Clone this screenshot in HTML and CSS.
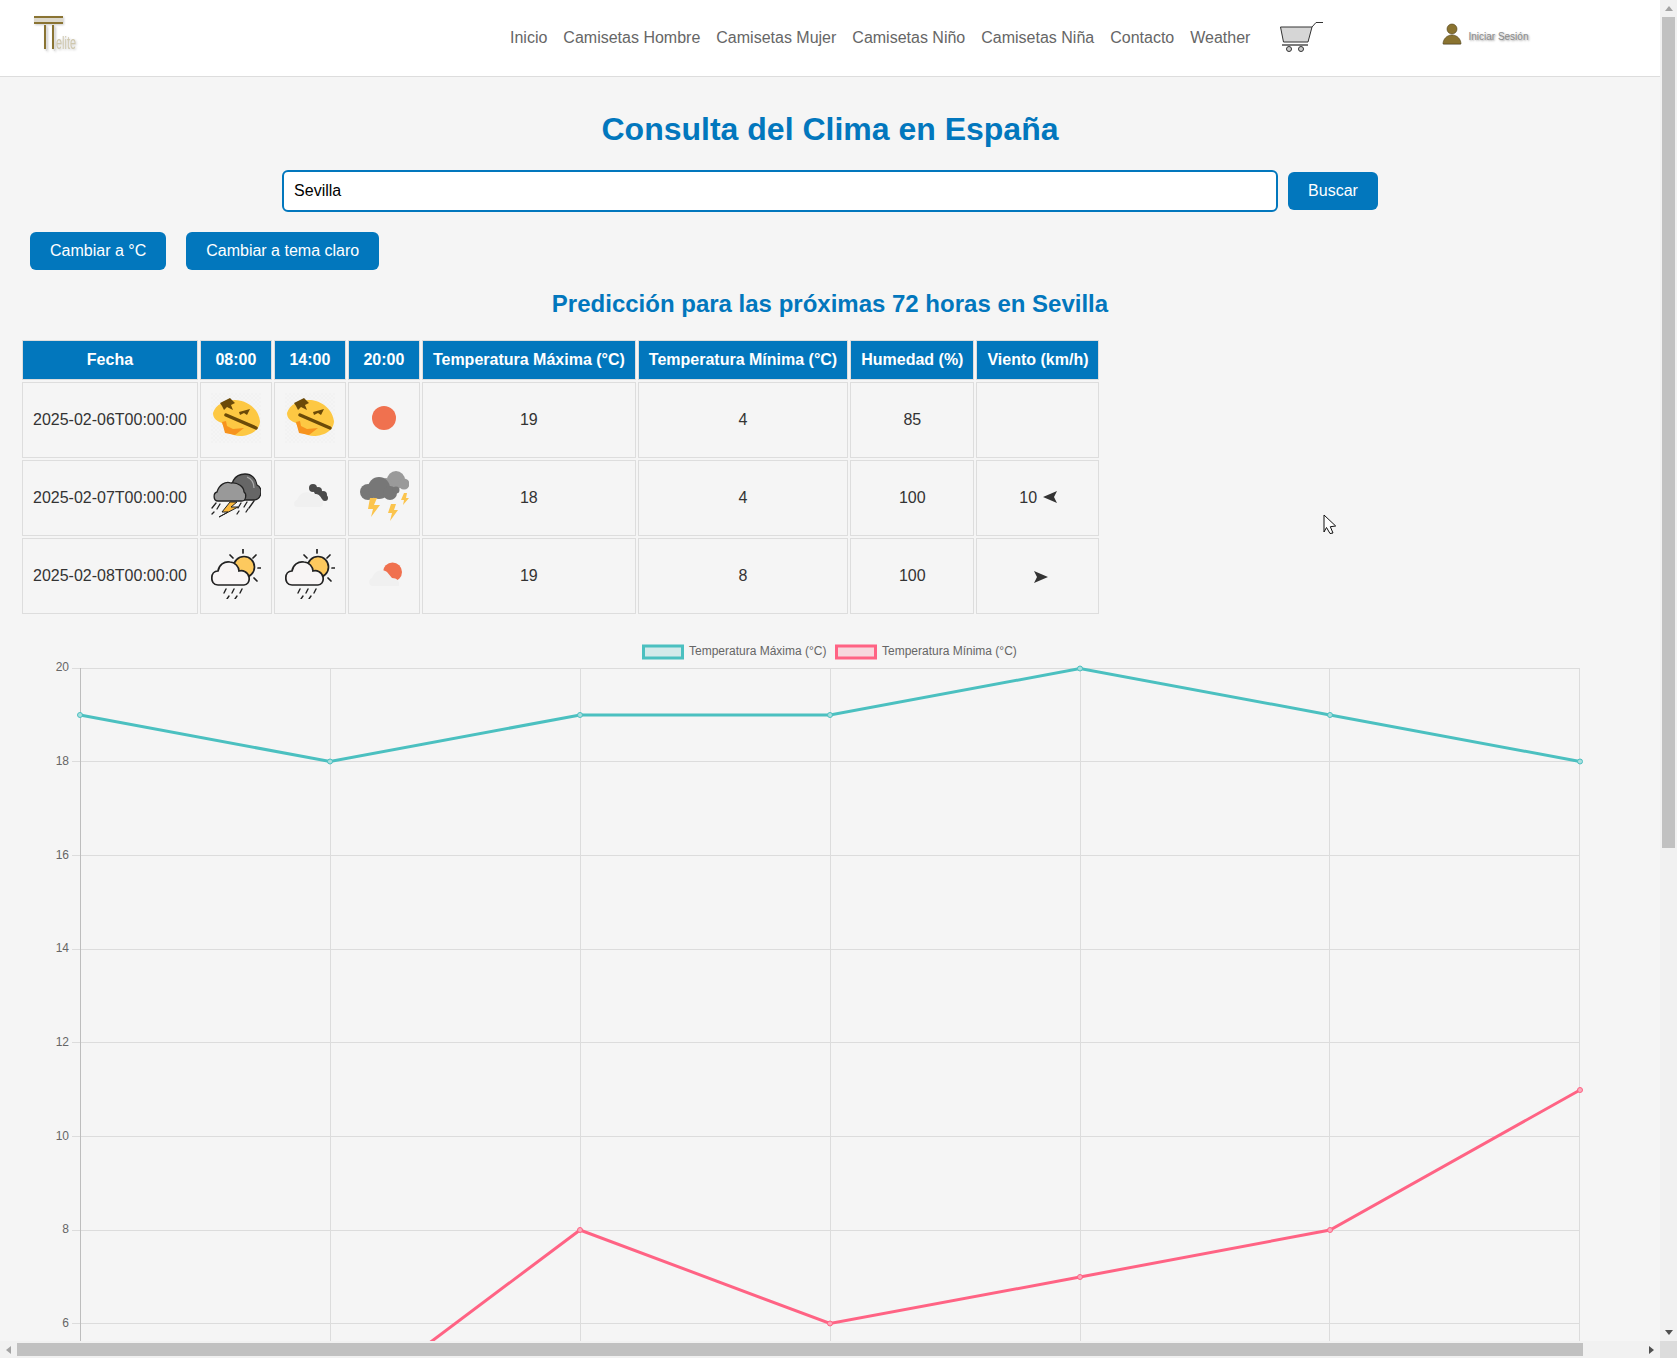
FILE: index.html
```html
<!DOCTYPE html>
<html lang="es">
<head>
<meta charset="utf-8">
<title>Consulta del Clima en España</title>
<link rel="stylesheet" href="styles.css">
</head>
<body>
<svg class="defs" width="0" height="0" aria-hidden="true">
  <defs>
    <pattern id="checker" width="4" height="4" patternUnits="userSpaceOnUse">
      <rect width="2" height="2" fill="#ededed"/><rect x="2" y="2" width="2" height="2" fill="#ededed"/>
    </pattern>
    <symbol id="i-broken" viewBox="0 0 50 50">
      <rect width="50" height="50" fill="url(#checker)" opacity=".35"/>
      <path d="M2 20C4 12 14 7 24 7C34 7 47 14 49 28C49 38 38 43 29 43C20 43 14 38 11 30C6 28 2 26 2 20Z" fill="#fdc843"/>
      <path d="M11 29L14 40L24 42L33 35L22 36L16 33L15 28Z" fill="#f7931e"/>
      <path d="M15 22L45 35" stroke="#6b4a08" stroke-width="3.500" stroke-linecap="round"/>
      <path d="M9 10L19 5L24 10L20 12L22 17L16 14L13 17L11 13Z" fill="#6b4a08"/>
      <path d="M28 19L39 16L36 22L33 20L29 22Z" fill="#6b4a08"/>
    </symbol>
    <symbol id="i-sunrain" viewBox="0 0 50 50">
      <g stroke="#222" stroke-width="1.700" stroke-linecap="round" fill="none">
        <path d="M32 0V4M19 6L22 9M45 6L42 9M47 19H50M43 29L46 32"/>
        <circle cx="33" cy="18" r="10.500" fill="#fdc95e"/>
        <path d="M7 36C2 36 .8 32 .8 29C.8 25 3 22 7 22C8 16 13 12 19 13C24 13 28 18 28 22C32 21 37 23 38 28C39 33 36 36 33 36Z" fill="#f8f5f5"/>
        <path d="M15 40L13 44M23 40L21 44M31 40L29 44M18 47L16 50M26 47L24 50" stroke-width="1.400"/>
      </g>
    </symbol>
    <symbol id="i-arrow" viewBox="0 0 14 12">
      <path d="M0 0L14 6L0 12L3 6Z" fill="#333"/>
    </symbol>
  </defs>
</svg>

<div class="window">
  <div class="page">
    <header class="topbar">
      <svg class="logo" width="47" height="40" viewBox="0 0 47 40" aria-label="Logo">
        <rect x="1" y="4" width="29" height="2" fill="#8a7433"/>
        <rect x="1" y="6" width="29" height="4" fill="#dcd8cc"/>
        <rect x="1" y="10" width="29" height="2" fill="#8a7433"/>
        <rect x="11" y="13" width="2" height="24" fill="#8a7433"/>
        <rect x="19" y="13" width="2" height="24" fill="#8a7433"/>
        <rect x="13" y="14" width="1" height="25" fill="#ddd"/>
        <rect x="21" y="14" width="1" height="25" fill="#ddd"/>
        <text class="logo-text" x="23" y="37" textLength="20" lengthAdjust="spacingAndGlyphs">elite</text>
      </svg>
      <nav class="nav">
        <a>Inicio</a>
        <a>Camisetas Hombre</a>
        <a>Camisetas Mujer</a>
        <a>Camisetas Niño</a>
        <a>Camisetas Niña</a>
        <a>Contacto</a>
        <a>Weather</a>
      </nav>
      <svg class="cart" width="44" height="32" viewBox="0 0 44 32" aria-label="Carrito">
        <path d="M1.500 9H33L29 24H4.500Z" fill="#d6d6d6" stroke="#333" stroke-width="1"/>
        <path d="M33 9L37 4.500H44" fill="none" stroke="#333" stroke-width="1"/>
        <path d="M3 27H29" stroke="#333" stroke-width="1.300"/>
        <circle cx="10" cy="31" r="2.500" fill="#ccc" stroke="#333"/>
        <circle cx="22" cy="31" r="2.500" fill="#ccc" stroke="#333"/>
      </svg>
      <div class="login">
        <svg width="20" height="22" viewBox="0 0 20 22" aria-hidden="true">
          <ellipse cx="10" cy="21.500" rx="9" ry="1" fill="#ccc"/>
          <circle cx="10" cy="6" r="5" fill="#8a7330" stroke="#4d3f18" stroke-width=".6"/>
          <path d="M1 21C1 16 5 12 10 12C15 12 19 16 19 21Z" fill="#8a7330" stroke="#4d3f18" stroke-width=".6"/>
        </svg>
        <span class="login-text">Iniciar Sesión</span>
      </div>
    </header>

    <main>
      <h1>Consulta del Clima en España</h1>
      <form class="search">
        <input class="search-input" type="text" value="Sevilla">
        <button class="btn" type="button">Buscar</button>
      </form>
      <div class="toggles">
        <button class="btn" type="button">Cambiar a °C</button>
        <button class="btn" type="button">Cambiar a tema claro</button>
      </div>
      <h2>Predicción para las próximas 72 horas en Sevilla</h2>

      <table class="forecast">
        <thead>
          <tr>
            <th>Fecha</th><th class="col-icon">08:00</th><th class="col-icon">14:00</th><th class="col-icon">20:00</th>
            <th>Temperatura Máxima (°C)</th><th>Temperatura Mínima (°C)</th><th>Humedad (%)</th><th>Viento (km/h)</th>
          </tr>
        </thead>
        <tbody>
          <tr>
            <td>2025-02-06T00:00:00</td>
            <td><svg class="wx"><use href="#i-broken"/></svg></td>
            <td><svg class="wx"><use href="#i-broken"/></svg></td>
            <td><svg class="wx" viewBox="0 0 50 50"><circle cx="25" cy="25" r="12" fill="#f0714f"/></svg></td>
            <td>19</td><td>4</td><td>85</td><td></td>
          </tr>
          <tr>
            <td>2025-02-07T00:00:00</td>
            <td>
              <svg class="wx" viewBox="0 0 50 50">
                <path d="M22 24C18 13 23 3 34 3C41 3 45 8 46 14C50 16 50.500 20 49.500 24C48 28 46 29 43 29H26Z" fill="#666" stroke="#222" stroke-width="1.300"/>
                <path d="M36 6C41 8 43 12 43 17" fill="none" stroke="#aaa" stroke-width="1.200"/>
                <path d="M7 30C2 30 2 22 6 21C8 14 14 10 20 12C27 11 33 16 33 21C36 23 35 30 31 30Z" fill="#999" stroke="#222" stroke-width="1.300"/>
                <path d="M19 31L11 41H17L8 46L27 36H20L26 31Z" fill="#fbb93d" stroke="#222" stroke-width="1"/>
                <path d="M5 32L1 37M9 33L6 38M3 41L1 43M30 32L27 37M36 31L33 36M43 30L38 37M28 40L26 43M37 38L35 41" stroke="#222" stroke-width="1.300" stroke-linecap="round"/>
              </svg>
            </td>
            <td>
              <svg class="wx" viewBox="0 0 50 50">
                <g fill="#4a4a4a"><circle cx="28" cy="17" r="4"/><circle cx="33" cy="20" r="4"/><circle cx="38" cy="24" r="4"/><circle cx="40" cy="27" r="3"/></g>
                <path d="M12 36C8 36 8 30 12 29C14 22 22 19 27 23C33 22 37 26 37 30C39 32 38 36 35 36Z" fill="#f0f0f0"/>
              </svg>
            </td>
            <td>
              <svg class="wx" viewBox="0 0 50 50">
                <g fill="#9a9a9a"><circle cx="37" cy="9" r="9"/><circle cx="45" cy="13" r="5.500"/><circle cx="27" cy="13" r="6"/></g>
                <g fill="#777"><circle cx="9" cy="21" r="8"/><circle cx="20" cy="17" r="11"/><circle cx="31" cy="22" r="7"/><circle cx="37" cy="19" r="3.500"/></g>
                <path d="M11 27L9 38H14L12 46L21 34H15L18 27Z" fill="#fbc44d"/>
                <path d="M32 33L29 42H33L31 50L39 39H35L37 33Z" fill="#fbc44d"/>
                <path d="M45 22L42 29H45L44 34L50 27H47L48 22Z" fill="#fbc44d"/>
              </svg>
            </td>
            <td>18</td><td>4</td><td>100</td>
            <td>10 <svg class="wind wind-left"><use href="#i-arrow"/></svg></td>
          </tr>
          <tr>
            <td>2025-02-08T00:00:00</td>
            <td><svg class="wx"><use href="#i-sunrain"/></svg></td>
            <td><svg class="wx"><use href="#i-sunrain"/></svg></td>
            <td>
              <svg class="wx" viewBox="0 0 50 50">
                <circle cx="33.500" cy="23" r="9.500" fill="#f0714f"/>
                <path d="M14 37C9 37 9 30 13 29C15 22 23 19 28 23L33 29C38 29 41 32 40 37Z" fill="#f0f0f0"/>
              </svg>
            </td>
            <td>19</td><td>8</td><td>100</td>
            <td><svg class="wind wind-solo"><use href="#i-arrow"/></svg></td>
          </tr>
        </tbody>
      </table>

      <svg class="chart" width="1660" height="800" viewBox="0 630 1660 800" role="img" aria-label="Gráfico de temperaturas">
        <g class="grid">
          <path d="M330.500 668V1430M580.500 668V1430M830.500 668V1430M1080.500 668V1430M1329.500 668V1430M1579.500 668V1430"/>
          <path d="M72 668.500H1580M72 761.500H1580M72 855.500H1580M72 949.500H1580M72 1042.500H1580M72 1136.500H1580M72 1230.500H1580M72 1323.500H1580"/>
        </g>
        <path class="axis" d="M80.500 668V1430"/>
        <g class="ticks">
          <text x="69" y="671">20</text><text x="69" y="765">18</text><text x="69" y="859">16</text><text x="69" y="952">14</text>
          <text x="69" y="1046">12</text><text x="69" y="1140">10</text><text x="69" y="1233">8</text><text x="69" y="1327">6</text>
        </g>
        <rect class="legend-max" x="643.500" y="646" width="39" height="12"/>
        <text class="legend-text" x="689" y="655">Temperatura Máxima (°C)</text>
        <rect class="legend-min" x="836.500" y="646" width="39" height="12"/>
        <text class="legend-text" x="882" y="655">Temperatura Mínima (°C)</text>
        <polyline class="line-max" points="80,715 330,761.500 580,715 830,715 1080,668.500 1330,715 1580,761.500"/>
        <polyline class="line-min" points="80,1417.500 330,1417.500 580,1230 830,1323.500 1080,1277 1330,1230 1580,1090"/>
        <g class="pts-max">
          <circle cx="80" cy="715" r="2.500"/><circle cx="330" cy="761.500" r="2.500"/><circle cx="580" cy="715" r="2.500"/><circle cx="830" cy="715" r="2.500"/>
          <circle cx="1080" cy="668.500" r="2.500"/><circle cx="1330" cy="715" r="2.500"/><circle cx="1580" cy="761.500" r="2.500"/>
        </g>
        <g class="pts-min">
          <circle cx="580" cy="1230" r="2.500"/><circle cx="830" cy="1323.500" r="2.500"/><circle cx="1080" cy="1277" r="2.500"/><circle cx="1330" cy="1230" r="2.500"/><circle cx="1580" cy="1090" r="2.500"/>
        </g>
      </svg>
    </main>

    <svg class="cursor" width="14" height="21" viewBox="0 0 14 21" aria-hidden="true">
      <path d="M1 1L12.700 12L7.300 12.700L10 19L7 19.500L3.500 13.500L1 18Z" fill="#fff" stroke="#111" stroke-width="1"/>
    </svg>
  </div>

  <div class="vbar">
    <span class="arrow arrow-up"></span>
    <div class="vtrack"><div class="vthumb"></div></div>
    <span class="arrow arrow-down"></span>
  </div>
  <div class="hbar">
    <span class="arrow arrow-left"></span>
    <div class="htrack"><div class="hthumb"></div></div>
    <span class="arrow arrow-right"></span>
  </div>
  <div class="corner"></div>
</div>
</body>
</html>
```

FILE: styles.css
```css
* { box-sizing: border-box; }

html, body {
  margin: 0;
  height: 100%;
  overflow: hidden;
}

body {
  font-family: "Liberation Sans", Arial, sans-serif;
  font-size: 16px;
  color: #333;
  background: #f5f5f5;
}

.defs { position: absolute; }

.window {
  display: grid;
  grid-template-columns: 1fr 17px;
  grid-template-rows: 1fr 17px;
  width: 100vw;
  height: 100vh;
}

.page {
  position: relative;
  overflow: hidden;
  min-width: 0;
  min-height: 0;
}

/* header */
.topbar {
  display: flex;
  align-items: center;
  height: 77px;
  padding: 0 0 2px 33px;
  background: #fff;
  border-bottom: 1px solid #ddd;
}

.logo {
  flex: none;
  align-self: flex-start;
  margin-top: 12px;
  overflow: visible;
  filter: drop-shadow(1px 1px 1px rgba(0,0,0,.2));
}

.logo-text { font-family: "Liberation Sans", sans-serif; font-size: 18px; fill: #cfc7ad; }

.nav {
  display: flex;
  gap: 16px;
  margin-left: 430px;
  margin-top: 2px;
  color: #666;
}

.cart { flex: none; margin-left: 29px; margin-top: -6px; overflow: visible; }

.login {
  display: flex;
  align-items: center;
  gap: 6px;
  margin-left: 119px;
  margin-top: -7px;
  font-size: 10px;
  color: #8a8a8a;
  text-shadow: 1px 1px 2px #999;
}

.login-text { margin-top: 5px; }

/* headings and form */
h1 {
  margin: 34px 0 22px;
  font-size: 32px;
  line-height: 37px;
  text-align: center;
  color: #0277bd;
}

.search {
  display: flex;
  justify-content: center;
  align-items: center;
  gap: 10px;
  height: 42px;
  margin-bottom: 20px;
}

.search-input {
  width: 996px;
  height: 42px;
  padding: 10px;
  font: inherit;
  color: #000;
  background: #fff;
  border: 2px solid #0277bd;
  border-radius: 6px;
  outline: none;
}

.btn {
  height: 38px;
  padding: 10px 20px;
  font: inherit;
  line-height: 18px;
  color: #fff;
  background: #0277bd;
  border: 0;
  border-radius: 6px;
}

.toggles {
  display: flex;
  gap: 20px;
  margin-left: 30px;
}

h2 {
  margin: 20px 0;
  font-size: 24px;
  line-height: 28px;
  text-align: center;
  color: #0277bd;
}

/* table */
.forecast {
  margin-left: 20px;
  border-collapse: separate;
  border-spacing: 2px;
}

.forecast th,
.forecast td {
  padding: 10px;
  text-align: center;
  border: 1px solid #ddd;
  line-height: 18px;
}

.forecast th {
  height: 40px;
  font-weight: bold;
  color: #fff;
  background: #0277bd;
}

.forecast td { height: 76px; }
.col-icon { width: 72px; }

.wx {
  display: block;
  width: 50px;
  height: 50px;
  margin: -4px auto 0;
  overflow: hidden;
}

.wind {
  display: inline-block;
  width: 14px;
  height: 12px;
  vertical-align: 0;
}

.wind-left { transform: rotate(180deg); margin-left: 1px; }
.wind-solo { margin-left: 7px; vertical-align: -2px; }

/* chart */
.chart { display: block; margin-top: 14px; }
.grid path { stroke: #dcdcdc; stroke-width: 1; fill: none; }
.axis { stroke: #bdbdbd; stroke-width: 1; }
.ticks text { font-size: 12px; fill: #666; text-anchor: end; }
.legend-text { font-size: 12px; fill: #666; }
.legend-max { fill: rgba(75,192,192,.2); stroke: rgb(75,192,192); stroke-width: 3; }
.legend-min { fill: rgba(255,99,132,.2); stroke: rgb(255,99,132); stroke-width: 3; }
.line-max, .line-min { fill: none; stroke-width: 3; }
.line-max { stroke: rgb(75,192,192); }
.line-min { stroke: rgb(255,99,132); }
.pts-max circle { fill: #a8dede; stroke: rgb(75,192,192); stroke-width: 1; }
.pts-min circle { fill: #fba9bb; stroke: rgb(255,99,132); stroke-width: 1; }

.cursor { position: absolute; left: 1323px; top: 514px; }

/* painted scrollbars */
.vbar, .hbar {
  display: flex;
  background: #f1f1f1;
}

.vbar { flex-direction: column; grid-column: 2; grid-row: 1; }
.hbar { grid-column: 1; grid-row: 2; }
.corner { grid-column: 2; grid-row: 2; background: #dcdcdc; }

.vtrack, .htrack { flex: 1; min-width: 0; min-height: 0; }
.vthumb { width: 13px; height: 831px; margin-left: 2px; background: #c1c1c1; }
.hthumb { width: 1566px; height: 13px; margin-top: 2px; background: #c1c1c1; }

.arrow {
  flex: none;
  display: flex;
  width: 17px;
  height: 17px;
  align-items: center;
  justify-content: center;
}

.arrow::before {
  content: "";
  border-style: solid;
  border-color: transparent;
}

.arrow-up::before { border-width: 0 4px 5px; border-bottom-color: #a3a3a3; }
.arrow-down::before { border-width: 5px 4px 0; border-top-color: #505050; }
.arrow-left::before { border-width: 4px 5px 4px 0; border-right-color: #a3a3a3; }
.arrow-right::before { border-width: 4px 0 4px 5px; border-left-color: #505050; }
```
